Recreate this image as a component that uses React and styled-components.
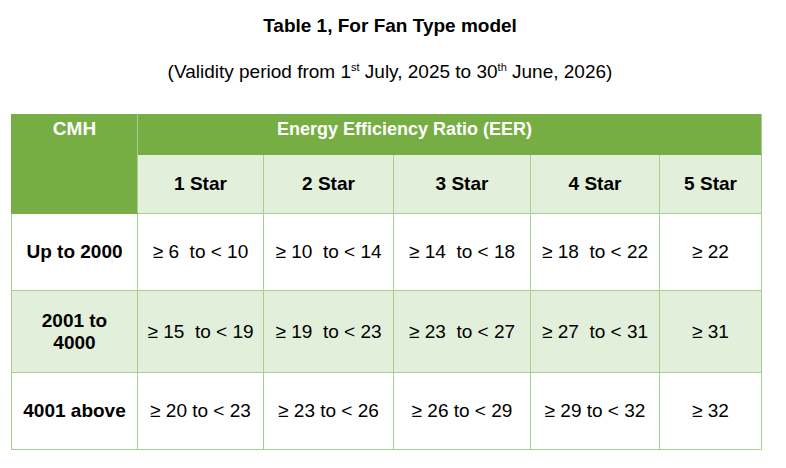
import styled, { createGlobalStyle } from "styled-components";

const GlobalStyle = createGlobalStyle`
  html, body {
    margin: 0;
    padding: 0;
    background: #ffffff;
  }
  body {
    font-family: "Liberation Sans", Arial, sans-serif;
    color: #000000;
  }
`;

const columns = [126, 126, 130, 137, 129, 102];
const stars = ["1 Star", "2 Star", "3 Star", "4 Star", "5 Star"];

const rows = [
  {
    label: ["Up to 2000"],
    values: ["≥ 6  to < 10", "≥ 10  to < 14", "≥ 14  to < 18", "≥ 18  to < 22", "≥ 22"],
    height: 77,
  },
  {
    label: ["2001 to", "4000"],
    values: ["≥ 15  to < 19", "≥ 19  to < 23", "≥ 23  to < 27", "≥ 27  to < 31", "≥ 31"],
    height: 82,
    shaded: true,
  },
  {
    label: ["4001 above"],
    values: ["≥ 20 to < 23", "≥ 23 to < 26", "≥ 26 to < 29", "≥ 29 to < 32", "≥ 32"],
    height: 77,
  },
];

const App = () => {
  return (
    <Page>
      <GlobalStyle />
      <Title>Table 1, For Fan Type model</Title>
      <SubTitle>
        (Validity period from 1<sup>st</sup> July, 2025 to 30<sup>th</sup> June, 2026)
      </SubTitle>
      <Table>
        <colgroup>
          {columns.map((w, i) => (
            <col key={i} style={{ width: w }} />
          ))}
        </colgroup>
        <thead>
          <tr>
            <CmhCell rowSpan={2}>CMH</CmhCell>
            <EerCell colSpan={5}>Energy Efficiency Ratio (EER)</EerCell>
          </tr>
          <tr>
            {stars.map((s) => (
              <StarCell key={s}>{s}</StarCell>
            ))}
          </tr>
        </thead>
        <tbody>
          {rows.map((row) => (
            <Row key={row.label.join(" ")} $shaded={row.shaded} $height={row.height}>
              <LabelCell>
                {row.label.map((line) => (
                  <div key={line}>{line}</div>
                ))}
              </LabelCell>
              {row.values.map((v, i) => (
                <ValueCell key={i}>{v}</ValueCell>
              ))}
            </Row>
          ))}
        </tbody>
      </Table>
    </Page>
  );
};

export default App;

const Page = styled.div`
  width: 786px;
  height: 468px;
  display: flex;
  flex-direction: column;
  padding-top: 15px;
  box-sizing: border-box;
`;
const Title = styled.div`
  width: 780px;
  text-align: center;
  font-size: 19px;
  font-weight: bold;
  line-height: 22px;
`;
const SubTitle = styled.div`
  width: 780px;
  text-align: center;
  font-size: 19px;
  line-height: 22px;
  margin-top: 24px;

  sup {
    font-size: 11px;
    line-height: 0;
    vertical-align: 7px;
  }
`;
const Table = styled.table`
  margin-top: 31px;
  margin-left: 11px;
  width: 750px;
  border-collapse: collapse;
  table-layout: fixed;
  font-size: 19px;

  td,
  th {
    border: 1px solid #a8d08d;
    padding: 0;
    text-align: center;
  }
`;
const CmhCell = styled.th`
  background: #77ae43;
  color: #ffffff;
  font-weight: bold;
  vertical-align: top;
  padding-top: 5px !important;
  line-height: 18px;
  border-color: #77ae43 !important;
  border-right-color: #a8d08d !important;
`;
const EerCell = styled.th`
  background: #77ae43;
  color: #ffffff;
  font-size: 18px;
  font-weight: bold;
  height: 34px;
  vertical-align: top;
  padding-top: 5px !important;
  padding-right: 90px !important;
  line-height: 18px;
  border-color: #77ae43 !important;
  border-right-color: #a8d08d !important;
`;
const StarCell = styled.th`
  background: #e2efda;
  font-weight: bold;
  height: 58px;
  vertical-align: middle;
`;
const Row = styled.tr`
  height: ${(p) => p.$height}px;
  background: ${(p) => (p.$shaded ? "#e2efda" : "#ffffff")};
`;
const LabelCell = styled.td`
  font-weight: bold;
  line-height: 22px;
  vertical-align: middle;
`;
const ValueCell = styled.td`
  white-space: pre;
  vertical-align: middle;
`;
